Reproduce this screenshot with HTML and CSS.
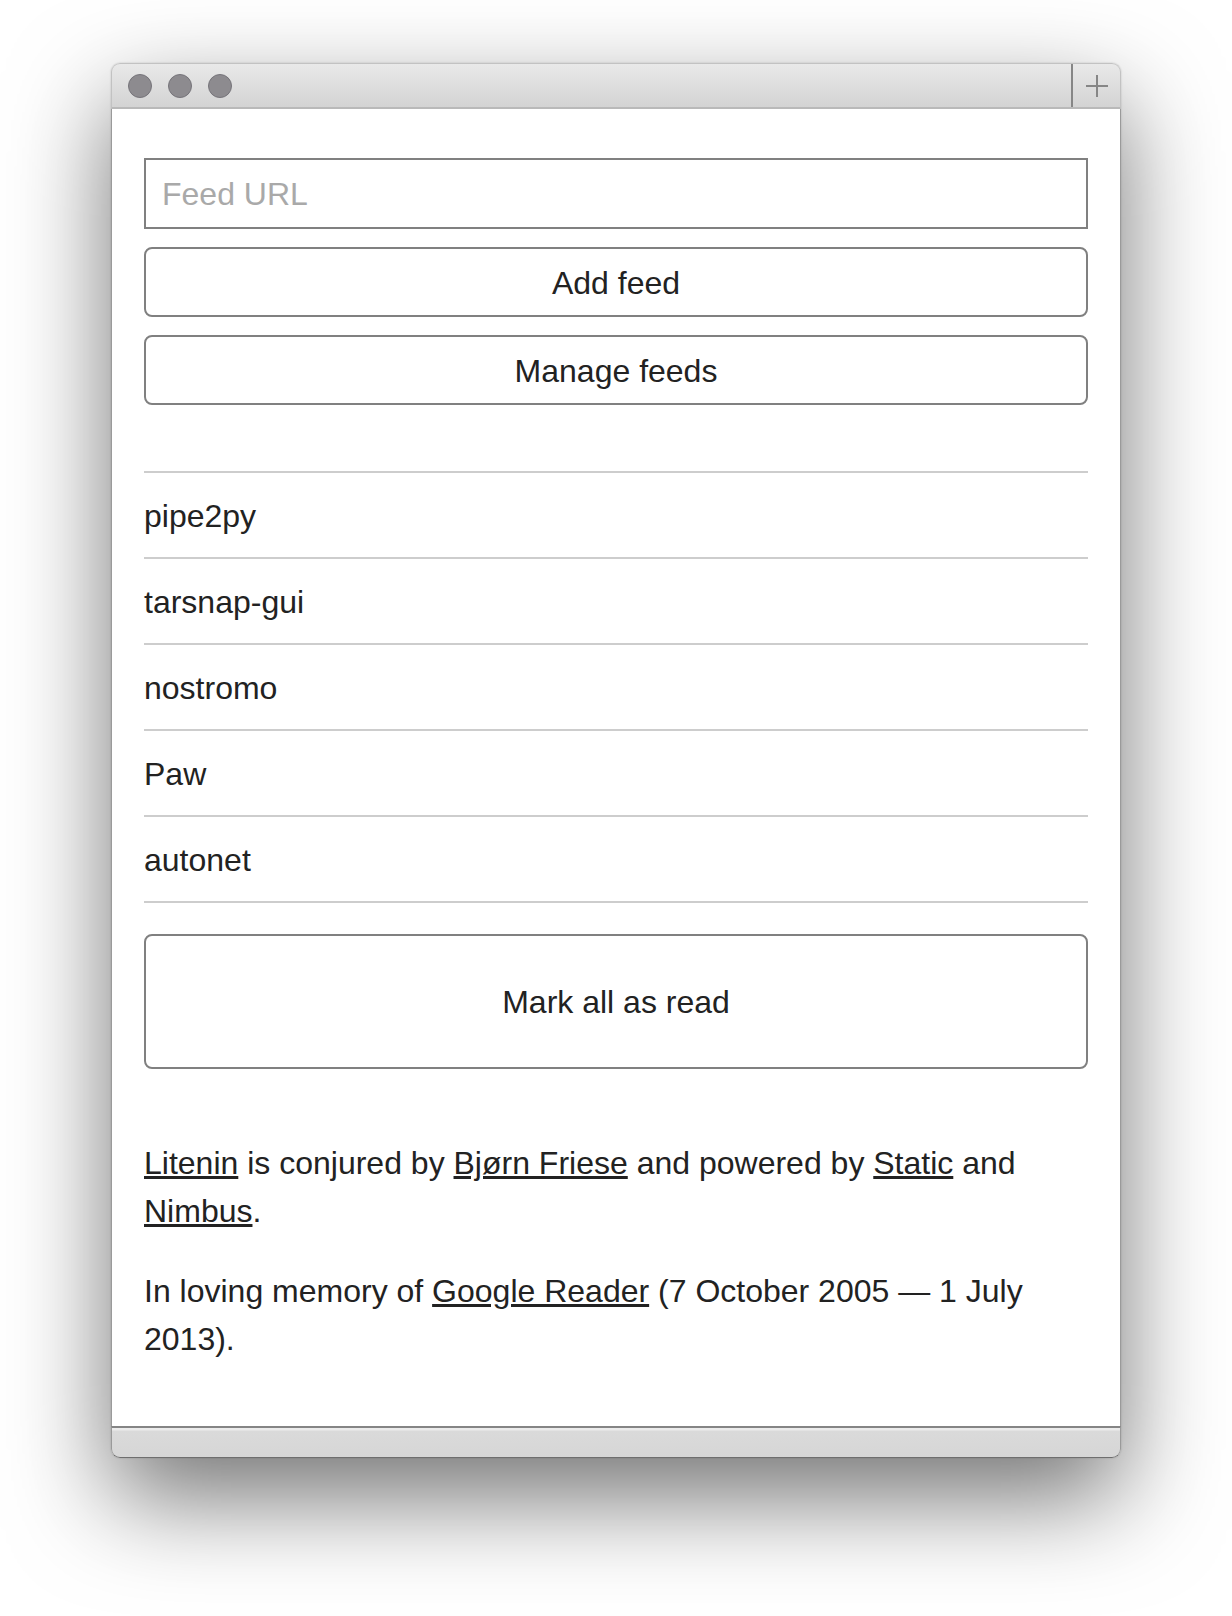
FILE: index.html
```html
<!DOCTYPE html>
<html lang="en">
<head>
  <meta charset="UTF-8" />
  <title>Litenin</title>
  <link rel="stylesheet" href="styles.css">
</head>
<body>

  <div class="window">
    <div class="titlebar">
      <div class="lights">
        <span class="light"></span>
        <span class="light"></span>
        <span class="light"></span>
      </div>
      <div class="newtab">
        <svg width="24" height="24" viewBox="0 0 24 24">
          <path d="M12 1v22M1 12h22" stroke="#868686" stroke-width="2" fill="none" />
        </svg>
      </div>
    </div>

    <div class="content">
      <input class="feed-input" type="text" placeholder="Feed URL">
      <button class="btn">Add feed</button>
      <button class="btn">Manage feeds</button>

      <ul class="feeds">
        <li>pipe2py</li>
        <li>tarsnap-gui</li>
        <li>nostromo</li>
        <li>Paw</li>
        <li>autonet</li>
      </ul>

      <button class="btn btn-big">Mark all as read</button>

      <div class="about">
        <p><a href="#">Litenin</a> is conjured by <a href="#">Bjørn Friese</a> and powered by <a href="#">Static</a> and <a href="#">Nimbus</a>.</p>
        <p>In loving memory of <a href="#">Google Reader</a> (7 October 2005 — 1 July 2013).</p>
      </div>
    </div>

    <div class="statusbar"></div>
  </div>

</body>
</html>
```

FILE: styles.css
```css
html, body {
  margin: 0;
  background: #fff;
}
body {
  min-height: 1616px;
  box-sizing: border-box;
  padding: 63px 111px 0;
  font-family: "Liberation Sans", Arial, sans-serif;
  color: #222;
}

.window {
  width: 1010px;
  border-radius: 9px;
  box-shadow: 0 40px 100px rgba(0, 0, 0, 0.55), 0 0 2px rgba(0, 0, 0, 0.2);
  background: #fff;
}

.titlebar {
  display: flex;
  justify-content: space-between;
  height: 46px;
  border: 1px solid #c2c2c2;
  border-bottom: 2px solid #b9b9b9;
  border-radius: 9px 9px 0 0;
  background: linear-gradient(#e9e9e9, #d3d3d3);
  box-sizing: border-box;
}
.lights {
  display: flex;
  align-items: center;
  gap: 16px;
  padding-left: 16px;
}
.light {
  width: 24px;
  height: 24px;
  border-radius: 50%;
  background: #8d8b8f;
  border: 1px solid #76747a;
  box-sizing: border-box;
}
.newtab {
  width: 47px;
  display: flex;
  align-items: center;
  justify-content: center;
  border-left: 2px solid #868686;
}

.content {
  display: flex;
  flex-direction: column;
  padding: 49px 32px 63px;
  border-left: 1px solid #9a9a9a;
  border-right: 1px solid #9a9a9a;
}

.feed-input {
  height: 71px;
  margin: 0;
  padding: 2px 16px 0;
  border: 2px solid #808080;
  border-radius: 0;
  font-family: inherit;
  font-size: 32px;
  color: #222;
  box-sizing: border-box;
  outline: none;
}
.feed-input::placeholder { color: #a9a9a9; }

.btn {
  height: 70px;
  margin-top: 18px;
  padding: 2px 0 0;
  border: 2px solid #808080;
  border-radius: 8px;
  background: #fff;
  font-family: inherit;
  font-size: 32px;
  color: #222;
  box-sizing: border-box;
}
.btn-big {
  height: 135px;
  margin-top: 31px;
}

.feeds {
  list-style: none;
  margin: 66px 0 0;
  padding: 0;
  border-top: 2px solid #cdcdcd;
}
.feeds li {
  height: 86px;
  padding-top: 19px;
  box-sizing: border-box;
  font-size: 32px;
  line-height: 48px;
  border-bottom: 2px solid #cdcdcd;
}

.about {
  margin-top: 70px;
  font-size: 32px;
  line-height: 48px;
}
.about p { margin: 0 0 32px; }
.about p:last-child { margin-bottom: 0; }
.about a { color: #222; text-decoration: underline; }

.statusbar {
  height: 32px;
  border: 1px solid #9a9a9a;
  border-top: 2px solid #858585;
  border-bottom-color: #6e6e6e;
  border-radius: 0 0 9px 9px;
  background: linear-gradient(#ececec 0, #ececec 2px, #dadada 3px, #d6d6d6);
  box-sizing: border-box;
}
```
